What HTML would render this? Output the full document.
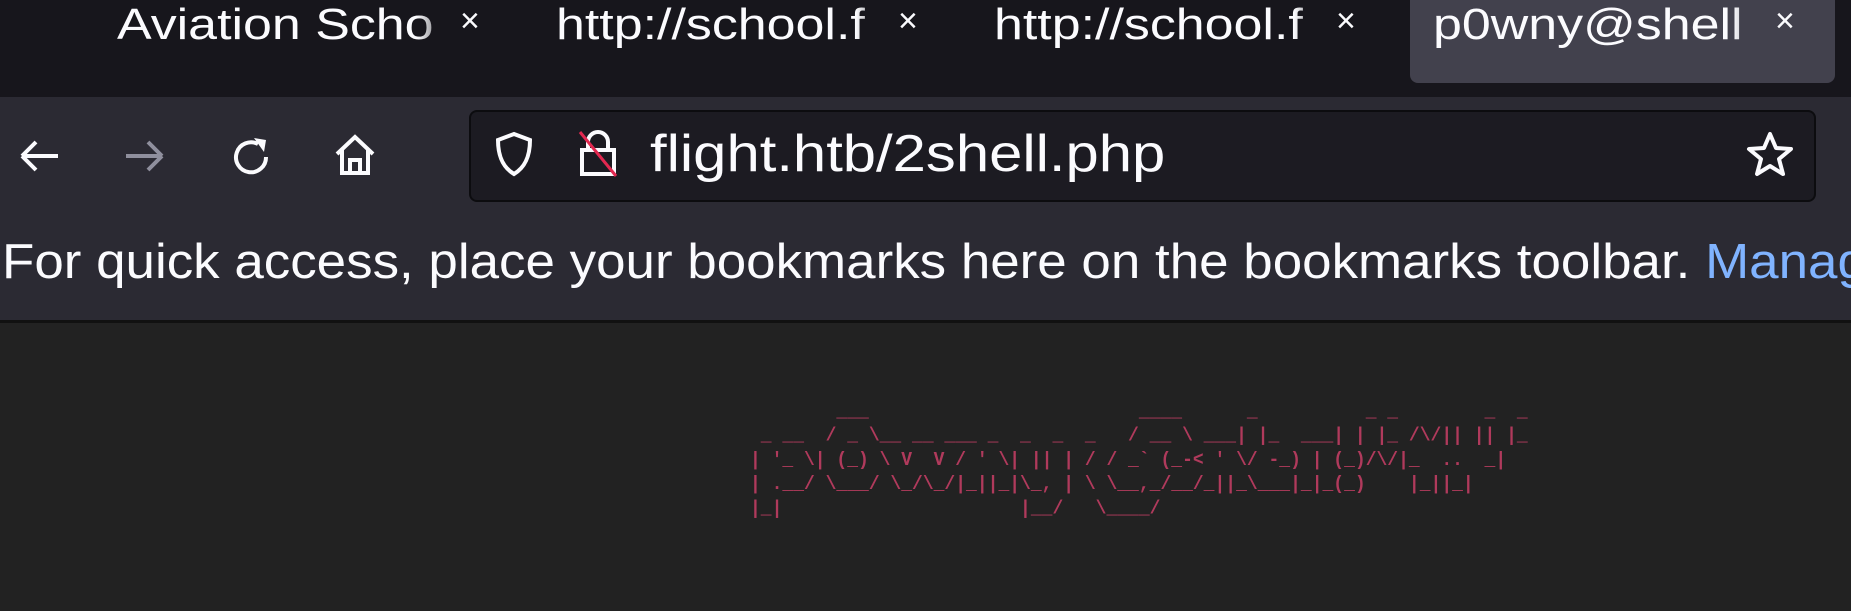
<!DOCTYPE html>
<html><head><style>
body{margin:0;width:1851px;height:611px;overflow:hidden;background:#222;font-family:"Liberation Sans",sans-serif;position:relative}
.tabs{position:absolute;left:0;top:0;width:1851px;height:97px;background:#17161c}
.tab{position:absolute;top:0;height:83px;color:#fbfbfe;font-size:44px;line-height:46px;white-space:nowrap;overflow:hidden}
.tab span{position:absolute;top:2px;left:0;transform:scaleX(1.18);transform-origin:left}
.tab i{position:absolute;right:0;top:0;width:40px;height:60px}
.x{position:absolute;top:2px;color:#fbfbfe;font-size:34px}
.tb{position:absolute;left:0;top:97px;width:1851px;height:223px;background:#2b2a33;border-bottom:3px solid #111}
.url{position:absolute;left:469px;top:110px;width:1343px;height:88px;background:#1c1b22;border:2px solid #0c0c0f;border-radius:8px}
.urltext{position:absolute;left:650px;top:124px;color:#fbfbfe;font-size:52px;transform:scaleX(1.15);transform-origin:left}
.bmw{position:absolute;left:0;top:234px;width:1851px;height:70px;overflow:hidden}
.bm{position:absolute;left:2px;top:0;color:#fbfbfe;font-size:49px;white-space:nowrap;transform:scaleX(1.08);transform-origin:left}
pre{position:absolute;left:750px;top:400px;margin:0;font-family:"Liberation Mono",monospace;font-size:18px;line-height:22px;color:#b03a5c;font-weight:bold;transform:scaleY(1.1);transform-origin:top}
svg{position:absolute}
</style></head><body>
<div class="tabs">
  <div style="position:absolute;left:1410px;top:0;width:425px;height:83px;background:#42414d;border-radius:0 0 8px 8px"></div>
  <div class="tab" style="left:117px;width:340px"><span>Aviation Scho</span><i style="background:linear-gradient(90deg,rgba(23,22,28,0),#17161c)"></i></div>
  <div class="x" style="left:460px">×</div>
  <div class="tab" style="left:556px;width:340px"><span>http://school.f</span><i style="background:linear-gradient(90deg,rgba(23,22,28,0),#17161c)"></i></div>
  <div class="x" style="left:898px">×</div>
  <div class="tab" style="left:994px;width:340px"><span>http://school.f</span><i style="background:linear-gradient(90deg,rgba(23,22,28,0),#17161c)"></i></div>
  <div class="x" style="left:1336px">×</div>
  <div class="tab" style="left:1433px;width:340px"><span>p0wny@shell</span><i style="background:linear-gradient(90deg,rgba(66,65,77,0),#42414d)"></i></div>
  <div class="x" style="left:1775px">×</div>
</div>
<div class="tb"></div>
<svg style="left:14px;top:136px" width="50" height="40" viewBox="0 0 50 40"><path d="M8 20H44M8 20L22 6M8 20L22 34" stroke="#fbfbfe" stroke-width="4" fill="none"/></svg>
<svg style="left:120px;top:136px" width="50" height="40" viewBox="0 0 50 40"><path d="M6 20H42M42 20L28 6M42 20L28 34" stroke="#8f8f9d" stroke-width="4" fill="none"/></svg>
<svg style="left:228px;top:134px" width="46" height="46" viewBox="0 0 46 46"><path d="M38 23A15 15 0 1 1 30 10" stroke="#fbfbfe" stroke-width="4" fill="none"/><path d="M26 4L38 6L36 18Z" fill="#fbfbfe"/></svg>
<svg style="left:332px;top:132px" width="46" height="46" viewBox="0 0 46 46"><path d="M5 22L23 5L41 22M10 18V41H36V18M18 41V28H28V41" stroke="#fbfbfe" stroke-width="4" fill="none"/></svg>
<div class="url"></div>
<svg style="left:492px;top:130px" width="44" height="48" viewBox="0 0 44 48"><path d="M22 4L38 10C38 28 32 38 22 44C12 38 6 28 6 10Z" stroke="#fbfbfe" stroke-width="4" fill="none"/></svg>
<svg style="left:576px;top:128px" width="44" height="52" viewBox="0 0 44 52"><path d="M12 22V14A10 10 0 0 1 32 14V22M6 22H38V46H6Z" stroke="#fbfbfe" stroke-width="4" fill="none"/><path d="M4 4L40 48" stroke="#e22850" stroke-width="3"/></svg>
<div class="urltext">flight.htb/2shell.php</div>
<svg style="left:1746px;top:130px" width="48" height="48" viewBox="0 0 48 48"><path d="M24 4L30 18L45 19L33 29L37 44L24 36L11 44L15 29L3 19L18 18Z" stroke="#fbfbfe" stroke-width="4" fill="none" stroke-linejoin="round"/></svg>
<div class="bmw"><div class="bm">For quick access, place your bookmarks here on the bookmarks toolbar. <span style="color:#80b3ff">Manage bookmarks…</span></div></div>
<pre>        ___                         ____      _          _ _        _  _
 _ __  / _ \__ __ ___ _  _  _  _   / __ \ ___| |_  ___| | |_ /\/|| || |_
| '_ \| (_) \ V  V / ' \| || | / / _` (_-&lt; ' \/ -_) | (_)/\/|_  ..  _|
| .__/ \___/ \_/\_/|_||_|\_, | \ \__,_/__/_||_\___|_|_(_)    |_||_|
|_|                      |__/   \____/</pre>
</body></html>
